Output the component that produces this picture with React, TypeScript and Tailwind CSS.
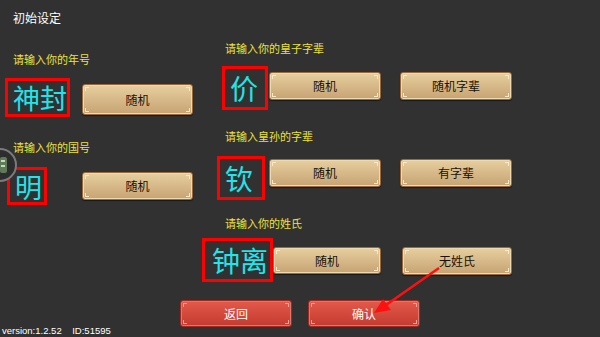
import React from 'react';

const cjk = { fontFamily: '"Noto Sans CJK SC", "Noto Sans", sans-serif' };

function TanButton({ label, className }: { label: string; className: string }) {
  return (
    <div
      className={`relative flex items-center justify-center rounded-[3px] border border-[#9a6a3c] bg-gradient-to-b from-[#e7cf9f] to-[#c7a373] shadow-[inset_0_0_0_1px_#efd9ad,0_1px_1px_rgba(0,0,0,0.5)] text-[12px] text-[#1a1208] ${className}`}
    >
      <span className="absolute left-[2px] top-[2px] h-[4px] w-[4px] border-l border-t border-[#f7e8c8]" />
      <span className="absolute right-[2px] top-[2px] h-[4px] w-[4px] border-r border-t border-[#f7e8c8]" />
      <span className="absolute left-[2px] bottom-[2px] h-[4px] w-[4px] border-l border-b border-[#f7e8c8]" />
      <span className="absolute right-[2px] bottom-[2px] h-[4px] w-[4px] border-r border-b border-[#f7e8c8]" />
      {label}
    </div>
  );
}

function RedButton({ label }: { label: string }) {
  return (
    <div className="relative flex h-[27px] w-[112px] items-center justify-center rounded-[3px] border border-[#9e2a22] bg-gradient-to-b from-[#e35a4b] to-[#c43a2f] shadow-[inset_0_0_0_1px_#e57467] text-[12px] text-white">
      <span className="absolute left-[2px] top-[2px] h-[4px] w-[4px] border-l border-t border-[#f0a399]" />
      <span className="absolute right-[2px] top-[2px] h-[4px] w-[4px] border-r border-t border-[#f0a399]" />
      <span className="absolute left-[2px] bottom-[2px] h-[4px] w-[4px] border-l border-b border-[#f0a399]" />
      <span className="absolute right-[2px] bottom-[2px] h-[4px] w-[4px] border-r border-b border-[#f0a399]" />
      {label}
    </div>
  );
}

function NameBox({ text, className, textClass }: { text: string; className: string; textClass: string }) {
  return (
    <div className={`flex items-center border-[3px] border-[#f00] pl-[5px] leading-none text-[#22e4ea] ${className}`}>
      <span className={textClass}>{text}</span>
    </div>
  );
}

function Label({ text, className }: { text: string; className: string }) {
  return <div className={`h-[14px] text-[11px] leading-[14px] text-[#ece23a] ${className}`}>{text}</div>;
}

export default function App() {
  return (
    <div className="relative h-[337px] w-[600px] overflow-hidden bg-[#313131]" style={cjk}>
      <div className="flex">
        {/* Left column */}
        <div className="flex w-[200px] flex-col">
          <div className="mt-[10px] h-[16px] pl-[13px] text-[12px] leading-[16px] text-white">初始设定</div>
          <Label text="请输入你的年号" className="mt-[26px] pl-[13px]" />
          <div className="mt-[12px] flex items-start">
            <NameBox text="神封" className="ml-[5px] h-[39px] w-[65px]" textClass="text-[27px]" />
            <TanButton label="随机" className="ml-[12px] mt-[6px] h-[31px] w-[111px]" />
          </div>
          <Label text="请输入你的国号" className="mt-[23px] pl-[13px]" />
          <div className="mt-[13px] flex items-start">
            <NameBox text="明" className="ml-[7px] h-[38px] w-[40px]" textClass="text-[27px]" />
            <TanButton label="随机" className="ml-[35px] mt-[5px] h-[28px] w-[111px]" />
          </div>
        </div>

        {/* Right column */}
        <div className="flex flex-1 flex-col">
          <Label text="请输入你的皇子字辈" className="mt-[41px] pl-[25px]" />
          <div className="mt-[11px] flex items-start">
            <NameBox text="价" className="ml-[22px] h-[44px] w-[46px]" textClass="text-[28px]" />
            <TanButton label="随机" className="ml-[1px] mt-[6px] h-[28px] w-[112px]" />
            <TanButton label="随机字辈" className="ml-[19px] mt-[6px] h-[28px] w-[112px]" />
          </div>
          <Label text="请输入皇孙的字辈" className="mt-[19px] pl-[25px]" />
          <div className="mt-[13px] flex items-start">
            <NameBox text="钦" className="ml-[17px] h-[44px] w-[48px]" textClass="text-[28px]" />
            <TanButton label="随机" className="ml-[4px] mt-[3px] h-[28px] w-[112px]" />
            <TanButton label="有字辈" className="ml-[19px] mt-[3px] h-[28px] w-[112px]" />
          </div>
          <Label text="请输入你的姓氏" className="mt-[16px] pl-[25px]" />
          <div className="mt-[8px] flex items-start">
            <NameBox text="钟离" className="ml-[2px] h-[44px] w-[71px] !pl-[7px]" textClass="text-[28px]" />
            <TanButton label="随机" className="mt-[9px] h-[27px] w-[108px]" />
            <TanButton label="无姓氏" className="ml-[21px] mt-[9px] h-[28px] w-[110px]" />
          </div>
        </div>
      </div>

      {/* Bottom row */}
      <div className="mt-[18px] flex items-start">
        <div
          className="mt-[26px] w-[180px] whitespace-pre pl-[2px] text-[9.5px] leading-[10px] text-white"
          style={{ fontFamily: '"Liberation Sans", Arial, sans-serif' }}
        >
          {'version:1.2.52    ID:51595'}
        </div>
        <RedButton label="返回" />
        <div className="ml-[16px]">
          <RedButton label="确认" />
        </div>
      </div>

      {/* side widget peeking from left edge */}
      <svg className="absolute left-0 top-[147px]" width="18" height="36" viewBox="0 0 18 36">
        <circle cx="0" cy="18" r="16" fill="#2d2d2d" stroke="#7a7a7a" strokeWidth="2" />
        <rect x="0" y="10" width="7" height="16" rx="2" fill="#5e7b5a" />
        <rect x="1" y="13" width="4" height="2" fill="#c9d8b8" />
        <rect x="1" y="18" width="4" height="2" fill="#c9d8b8" />
      </svg>

      {/* annotation arrow */}
      <svg className="absolute left-0 top-0" width="600" height="337" viewBox="0 0 600 337">
        <line x1="439" y1="268" x2="386" y2="305" stroke="#ff1010" strokeWidth="2.5" />
        <polygon points="374,313 383,299 391,310" fill="#ff1010" />
      </svg>
    </div>
  );
}
